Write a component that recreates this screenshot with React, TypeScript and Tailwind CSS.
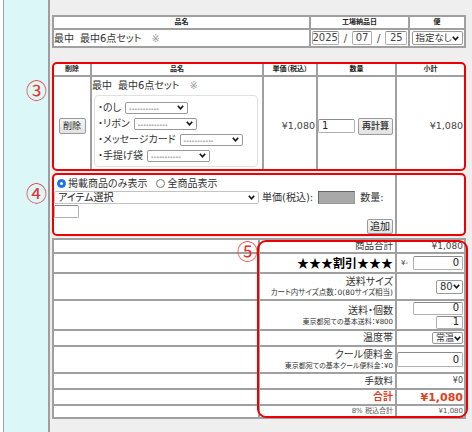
import React from "react";

const B = "border-[#a0a0a0]";

function Chevron() {
  return (
    <svg width="7" height="5" viewBox="0 0 7 5" className="shrink-0">
      <polyline points="0.8,0.8 3.5,3.8 6.2,0.8" fill="none" stroke="#111" strokeWidth="1.6" />
    </svg>
  );
}

function Sel({ className, children }: { className: string; children: React.ReactNode }) {
  return (
    <div
      className={
        "flex items-center justify-between bg-white border border-[#9a9a9a] rounded-[2px] pl-[3px] pr-[3px] shrink-0 " +
        className
      }
    >
      <span className="leading-none whitespace-nowrap">{children}</span>
      <Chevron />
    </div>
  );
}

function Dashes() {
  return <span className="text-[7px] text-[#222] tracking-[0.2px]">-----------</span>;
}

function Inp({ className, children }: { className: string; children?: React.ReactNode }) {
  return (
    <div
      className={
        "flex items-center bg-white border border-[#b0b0b0] border-t-[#8a8a8a] rounded-[2px] px-[3px] shrink-0 leading-none " +
        className
      }
    >
      {children}
    </div>
  );
}

function Btn({ className, children }: { className: string; children: React.ReactNode }) {
  return (
    <div
      className={
        "flex items-center justify-center bg-gradient-to-b from-[#f6f6f6] to-[#e2e2e2] border border-[#9a9a9a] rounded-[2px] text-[9px] text-[#222] leading-none shrink-0 " +
        className
      }
    >
      {children}
    </div>
  );
}

function SumRow({
  h,
  label,
  value,
}: {
  h: string;
  label: React.ReactNode;
  value: React.ReactNode;
}) {
  return (
    <div className={"flex border-b-2 " + B + " " + h}>
      <div className="w-[204px] shrink-0" />
      <div className={"w-[137px] shrink-0 border-l-2 " + B + " flex flex-col items-end justify-center pr-[2px]"}>
        {label}
      </div>
      <div className={"w-[69px] shrink-0 border-l-2 " + B + " flex flex-col items-end justify-center pr-[1px]"}>
        {value}
      </div>
    </div>
  );
}

export default function App() {
  return (
    <div className="relative w-[472px] h-[432px] flex overflow-hidden bg-white text-[#333] font-['DejaVu_Sans','Noto_Sans_CJK_JP',sans-serif] [font-feature-settings:'palt']">
      <div className="w-[3px] shrink-0 bg-white" />
      <div className="w-[47px] shrink-0 bg-[#dcf7f7] border-l border-r-2 border-[#9e9e9e]" />
      <div className="flex-1 bg-[#efefef] pl-[2px] pt-[15px] flex flex-col">
        {/* Table 1 */}
        <div className={"w-[414px] h-[33px] border-2 " + B + " bg-white flex flex-col shrink-0"}>
          <div className={"h-[13px] flex border-b-2 " + B + " text-[7px] font-bold text-[#222]"}>
            <div className="w-[255px] flex items-center justify-center">品名</div>
            <div className={"w-[99px] border-l-2 " + B + " flex items-center justify-center"}>工場納品日</div>
            <div className={"w-[56px] border-l-2 " + B + " flex items-center justify-center"}>便</div>
          </div>
          <div className="flex-1 flex">
            <div className="w-[255px] flex items-center pl-[0px] text-[10px] text-[#333]">
              <span>最中</span>
              <span className="ml-[6px]">最中6点セット</span>
              <span className="ml-[10px] text-[#999]">※</span>
            </div>
            <div className={"w-[99px] border-l-2 " + B + " flex items-center justify-center text-[10px] text-[#444]"}>
              <Inp className="w-[27px] h-[14px] justify-center">2025</Inp>
              <span className="mx-[5px]">/</span>
              <Inp className="w-[20px] h-[14px] justify-center">07</Inp>
              <span className="mx-[5px]">/</span>
              <Inp className="w-[22px] h-[14px] justify-center">25</Inp>
            </div>
            <div className={"w-[56px] border-l-2 " + B + " flex items-center justify-center text-[9.5px]"}>
              <Sel className="w-[51px] h-[14px] text-[#333] pl-[2px] pr-[2px]">指定なし</Sel>
            </div>
          </div>
        </div>

        {/* Table 2 */}
        <div className="mt-[14px] w-[414px] h-[109px] border-2 border-[#ee0000] rounded-[5px] bg-white flex flex-col overflow-hidden shrink-0">
          <div className={"h-[13px] flex border-b-2 " + B + " text-[7px] font-bold text-[#222]"}>
            <div className="w-[36px] flex items-center justify-center">削除</div>
            <div className={"w-[172px] border-l-2 " + B + " flex items-center justify-center"}>品名</div>
            <div className={"w-[54px] border-l-2 " + B + " flex items-center justify-center"}>単価（税込）</div>
            <div className={"w-[79px] border-l-2 " + B + " flex items-center justify-center"}>数量</div>
            <div className={"w-[69px] border-l-2 " + B + " flex items-center justify-center"}>小計</div>
          </div>
          <div className="flex-1 flex">
            <div className="w-[36px] flex items-center justify-center pt-[6px]">
              <Btn className="w-[27px] h-[16px]">削除</Btn>
            </div>
            <div className={"w-[172px] border-l-2 " + B + " flex flex-col text-[10px]"}>
              <div className="h-[14px] flex items-center pt-[2px]">
                <span>最中</span>
                <span className="ml-[6px]">最中6点セット</span>
                <span className="ml-[10px] text-[#999]">※</span>
              </div>
              <div className="mt-[4px] ml-[2px] mr-[4px] border border-[#e0e0e0] rounded-[4px] pt-[5px] pb-[4px] px-[3px] flex flex-col gap-[3px]">
                <div className="h-[13px] flex items-center gap-[4px]">
                  <span>・のし</span>
                  <Sel className="w-[63px] h-[12px]"><Dashes /></Sel>
                </div>
                <div className="h-[13px] flex items-center gap-[4px]">
                  <span>・リボン</span>
                  <Sel className="w-[63px] h-[12px]"><Dashes /></Sel>
                </div>
                <div className="h-[13px] flex items-center gap-[4px]">
                  <span>・メッセージカード</span>
                  <Sel className="w-[63px] h-[12px]"><Dashes /></Sel>
                </div>
                <div className="h-[13px] flex items-center gap-[4px]">
                  <span>・手提げ袋</span>
                  <Sel className="w-[63px] h-[12px]"><Dashes /></Sel>
                </div>
              </div>
            </div>
            <div className={"w-[54px] border-l-2 " + B + " flex items-center justify-end pr-[1px] pt-[6px] text-[9.5px] text-[#444]"}>
              ¥1,080
            </div>
            <div className={"w-[79px] border-l-2 " + B + " flex items-center pt-[6px] gap-[3px] text-[10px]"}>
              <Inp className="w-[37px] h-[14px] text-[#222]">1</Inp>
              <Btn className="w-[35px] h-[17px] font-bold text-[#444]">再計算</Btn>
            </div>
            <div className={"w-[69px] border-l-2 " + B + " flex items-center justify-end pr-[1px] pt-[6px] text-[9.5px] text-[#444]"}>
              ¥1,080
            </div>
          </div>
        </div>

        {/* Table 3 */}
        <div className="mt-[2px] w-[414px] h-[63px] border-2 border-[#ee0000] rounded-[5px] bg-white flex overflow-hidden shrink-0">
          <div className="w-[341px] flex flex-col text-[10px]">
            <div className="h-[16px] flex items-center pl-[3px]">
              <span className="w-[9px] h-[9px] rounded-full bg-[#1a73e8] border border-[#1a73e8] flex items-center justify-center mr-[2px]">
                <span className="w-[3px] h-[3px] rounded-full bg-white" />
              </span>
              <span>掲載商品のみ表示</span>
              <span className="ml-[9px] w-[9px] h-[9px] rounded-full bg-white border border-[#777] mr-[2px]" />
              <span>全商品表示</span>
            </div>
            <div className="h-[13px] flex items-center">
              <Sel className="w-[205px] h-[13px] border-[#c4c4c4] text-[#222]">アイテム選択</Sel>
              <span className="ml-[3px]">単価(税込):</span>
              <div className="ml-[5px] w-[37px] h-[13px] bg-[#a9a9a9] border border-[#666] border-b-[#999] border-r-[#999] shrink-0" />
              <span className="ml-[5px]">数量:</span>
            </div>
            <div className="mt-[1px]">
              <Inp className="w-[25px] h-[13px]" />
            </div>
            <div className="flex justify-end pr-[2px] mt-[1px]">
              <Btn className="w-[26px] h-[15px] text-[10px]">追加</Btn>
            </div>
          </div>
          <div className={"w-[69px] border-l-2 " + B} />
        </div>

        {/* Summary */}
        <div className={"relative mt-[2px] w-[414px] border-t-2 border-x-2 " + B + " bg-white flex flex-col shrink-0"}>
          <SumRow
            h="h-[14px]"
            label={<span className="text-[9.5px] leading-none">商品合計</span>}
            value={<span className="text-[9px] leading-none text-[#444]">¥1,080</span>}
          />
          <SumRow
            h="h-[20px]"
            label={
              <span className="text-[12px] font-bold leading-none text-black font-['Noto_Sans_CJK_JP',sans-serif] [font-feature-settings:normal]">
                ★★★割引★★★
              </span>
            }
            value={
              <div className="flex items-center w-full pl-[4px]">
                <span className="text-[7px] text-[#333]">¥-</span>
                <Inp className="ml-auto w-[50px] h-[14px] justify-end text-[10px] text-[#222]">0</Inp>
              </div>
            }
          />
          <SumRow
            h="h-[27px]"
            label={
              <>
                <span className="text-[10px] leading-[13px]">送料サイズ</span>
                <span className="text-[7.5px] leading-[10px]">カート内サイズ点数：0(80サイズ相当)</span>
              </>
            }
            value={<Sel className="w-[27px] h-[14px] text-[10px] text-[#333]">80</Sel>}
          />
          <SumRow
            h="h-[30px]"
            label={
              <>
                <span className="text-[10px] leading-[13px]">送料・個数</span>
                <span className="text-[7px] leading-[10px]">東京都宛ての基本送料：¥800</span>
              </>
            }
            value={
              <>
                <Inp className="w-[50px] h-[13px] justify-end text-[10px] text-[#222]">0</Inp>
                <Inp className="mt-[1px] w-[27px] h-[13px] justify-end text-[10px] text-[#222]">1</Inp>
              </>
            }
          />
          <SumRow
            h="h-[16px]"
            label={<span className="text-[10px] leading-none">温度帯</span>}
            value={<Sel className="w-[31px] h-[12px] text-[9px] text-[#333] pl-[2px] pr-[2px]">常温</Sel>}
          />
          <SumRow
            h="h-[27px]"
            label={
              <>
                <span className="text-[10px] leading-[13px]">クール便料金</span>
                <span className="text-[7px] leading-[10px]">東京都宛ての基本クール便料金：¥0</span>
              </>
            }
            value={<Inp className="w-[66px] h-[15px] justify-end text-[10px] text-[#222]">0</Inp>}
          />
          <SumRow
            h="h-[16px]"
            label={<span className="text-[9.5px] leading-none">手数料</span>}
            value={<span className="text-[8px] leading-none text-[#444]">¥0</span>}
          />
          <SumRow
            h="h-[16px]"
            label={<span className="text-[10px] leading-none font-bold text-[#e2401c]">合計</span>}
            value={<span className="text-[11px] leading-none font-bold text-[#e2401c]">¥1,080</span>}
          />
          <SumRow
            h="h-[13px]"
            label={<span className="text-[7px] leading-none text-[#555]">8% 税込合計</span>}
            value={<span className="text-[7px] leading-none text-[#555]">¥1,080</span>}
          />
          <div className="absolute left-[203px] top-[0px] w-[211px] h-[178px] border-2 border-[#ee0000] rounded-[9px] pointer-events-none" />
          <div className="absolute left-[183px] top-[0px] text-[21px] leading-none text-[#e83030] font-['Noto_Sans_CJK_JP',sans-serif]">
            ⑤
          </div>
        </div>
      </div>

      <div className="absolute left-[26px] top-[79px] text-[21px] leading-none text-[#e83030] font-['Noto_Sans_CJK_JP',sans-serif]">
        ③
      </div>
      <div className="absolute left-[26px] top-[182px] text-[21px] leading-none text-[#e83030] font-['Noto_Sans_CJK_JP',sans-serif]">
        ④
      </div>
    </div>
  );
}
